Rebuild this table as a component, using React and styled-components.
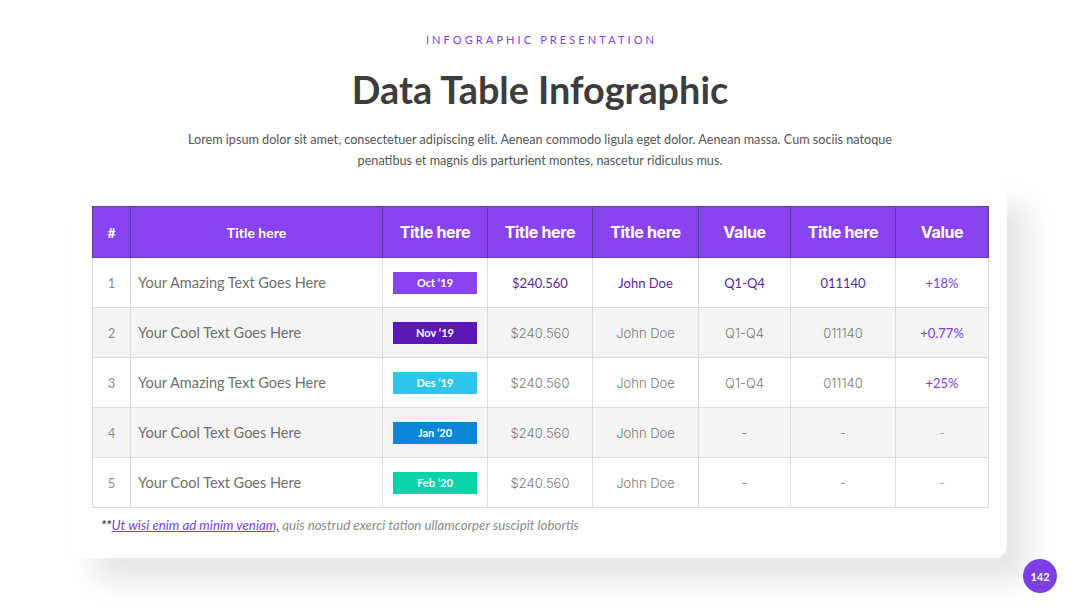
import React from "react";
import styled, { createGlobalStyle } from "styled-components";

const Global = createGlobalStyle`
  html, body { margin: 0; padding: 0; background: #ffffff; }
  body { width: 1080px; height: 608px; overflow: hidden; font-family: "Lato", "Open Sans", sans-serif; }
`;

const Page = styled.div`
  position: relative;
  width: 1080px;
  height: 608px;
  display: flex;
  flex-direction: column;
  align-items: center;
  box-sizing: border-box;
  padding-top: 33px;
`;

const Kicker = styled.div`
  font-family: "Lato", sans-serif;
  font-size: 11px;
  line-height: 14px;
  letter-spacing: 3.1px;
  color: #7b3fe4;
  margin-left: 3px;
`;

const Title = styled.h1`
  margin: 20px 0 0;
  font-family: "Lato", sans-serif;
  font-weight: 700;
  font-size: 37.8px;
  line-height: 46px;
  color: #3d3d3d;
`;

const Lead = styled.p`
  margin: 16px 0 0;
  width: 750px;
  text-align: center;
  font-family: "Lato", sans-serif;
  font-size: 12.65px;
  line-height: 21px;
  color: #555555;
`;

const Card = styled.div`
  margin-top: 9px;
  align-self: flex-start;
  margin-left: 72px;
  width: 935px;
  box-sizing: border-box;
  padding: 26px 19px 0 20px;
  height: 378px;
  background: #ffffff;
  border-radius: 12px;
  box-shadow: 22px 24px 28px rgba(0, 0, 0, 0.1);
`;

const Table = styled.table`
  width: 896px;
  border-collapse: collapse;
  table-layout: fixed;
`;

const HeadCell = styled.th`
  height: 50px;
  padding: 0;
  background: #8a43f0;
  border: 1px solid #5a3aa3;
  color: #ffffff;
  font-family: ${(p) => (p.$small ? '"Lato", sans-serif' : '"Inter", sans-serif')};
  font-weight: 700;
  font-size: ${(p) => (p.$small ? "14px" : "16px")};
  letter-spacing: ${(p) => (p.$small ? "0" : "-0.3px")};
  text-align: center;
`;

const Row = styled.tr`
  background: ${(p) => (p.$alt ? "#f4f4f4" : "#ffffff")};
`;

const Cell = styled.td`
  height: 49px;
  padding: 0;
  border: 1px solid #dcdcdc;
  text-align: ${(p) => (p.$left ? "left" : "center")};
  padding-left: ${(p) => (p.$left ? "7px" : "0")};
  font-family: ${(p) => (p.$calibri ? '"Lato", sans-serif' : '"Inter", sans-serif')};
  font-weight: ${(p) => (p.$calibri ? 400 : 300)};
  font-size: ${(p) => p.$size || "13px"};
  color: ${(p) => p.$color || "#7a7a7a"};
  white-space: nowrap;
`;

const Badge = styled.span`
  display: inline-block;
  width: 84px;
  height: 22px;
  line-height: 22px;
  background: ${(p) => p.$bg};
  color: #ffffff;
  font-family: "Lato", sans-serif;
  font-weight: 700;
  font-size: 11px;
  text-align: center;
  vertical-align: middle;
`;

const Note = styled.p`
  margin: 9px 0 0 9px;
  font-family: "Lato", sans-serif;
  font-style: italic;
  font-size: 13.3px;
  color: #8a8a8a;
`;

const Stars = styled.span`
  color: #444444;
  font-weight: 700;
`;

const NoteLink = styled.a`
  color: #7b3fe4;
  text-decoration: underline;
`;

const PageNum = styled.div`
  position: absolute;
  left: 1023px;
  top: 559px;
  width: 34px;
  height: 34px;
  border-radius: 50%;
  background: #7b3fe4;
  color: #ffffff;
  font-family: "Lato", sans-serif;
  font-weight: 700;
  font-size: 11px;
  display: flex;
  align-items: center;
  justify-content: center;
`;

const cols = [38, 252, 105, 105, 106, 92, 105, 93];

const rows = [
  { n: 1, text: "Your Amazing Text Goes Here", date: "Oct \u201819", bg: "#8a43f0", price: "$240.560", name: "John Doe", q: "Q1-Q4", code: "011140", val: "+18%", hi: true },
  { n: 2, text: "Your Cool Text Goes Here", date: "Nov \u201819", bg: "#5b17b7", price: "$240.560", name: "John Doe", q: "Q1-Q4", code: "011140", val: "+0.77%" },
  { n: 3, text: "Your Amazing Text Goes Here", date: "Des \u201819", bg: "#2dc6ea", price: "$240.560", name: "John Doe", q: "Q1-Q4", code: "011140", val: "+25%" },
  { n: 4, text: "Your Cool Text Goes Here", date: "Jan \u201820", bg: "#0a86d9", price: "$240.560", name: "John Doe", q: "-", code: "-", val: "-" },
  { n: 5, text: "Your Cool Text Goes Here", date: "Feb \u201820", bg: "#08d3a9", price: "$240.560", name: "John Doe", q: "-", code: "-", val: "-" },
];

export default function App() {
  return (
    <>
      <Global />
      <Page>
        <Kicker>INFOGRAPHIC PRESENTATION</Kicker>
        <Title>Data Table Infographic</Title>
        <Lead>
          Lorem ipsum dolor sit amet, consectetuer adipiscing elit. Aenean commodo ligula eget dolor. Aenean massa. Cum sociis natoque penatibus et magnis dis parturient montes, nascetur ridiculus mus.
        </Lead>
        <Card>
          <Table>
            <colgroup>
              {cols.map((w, i) => (
                <col key={i} style={{ width: w }} />
              ))}
            </colgroup>
            <thead>
              <tr>
                <HeadCell $small>#</HeadCell>
                <HeadCell $small>Title here</HeadCell>
                <HeadCell>Title here</HeadCell>
                <HeadCell>Title here</HeadCell>
                <HeadCell>Title here</HeadCell>
                <HeadCell>Value</HeadCell>
                <HeadCell>Title here</HeadCell>
                <HeadCell>Value</HeadCell>
              </tr>
            </thead>
            <tbody>
              {rows.map((r, i) => {
                const dark = r.hi ? "#5a1fae" : undefined;
                const isDash = r.val === "-";
                return (
                  <Row key={r.n} $alt={i % 2 === 1}>
                    <Cell $calibri $size="13px" $color="#8a8f99">{r.n}</Cell>
                    <Cell $left $calibri $size="14.5px" $color="#6f6f6f">{r.text}</Cell>
                    <Cell><Badge $bg={r.bg}>{r.date}</Badge></Cell>
                    <Cell $calibri={r.hi} $color={dark}>{r.price}</Cell>
                    <Cell $calibri={r.hi} $color={dark}>{r.name}</Cell>
                    <Cell $calibri={r.hi} $color={dark}>{r.q}</Cell>
                    <Cell $calibri={r.hi} $color={dark}>{r.code}</Cell>
                    <Cell $calibri={!isDash} $color={isDash ? "#9a9a9a" : "#7d3ee0"}>
                      {r.val}
                    </Cell>
                  </Row>
                );
              })}
            </tbody>
          </Table>
          <Note>
            <Stars>**</Stars>
            <NoteLink>Ut wisi enim ad minim veniam,</NoteLink> quis nostrud exerci tation ullamcorper suscipit lobortis
          </Note>
        </Card>
        <PageNum>142</PageNum>
      </Page>
    </>
  );
}
